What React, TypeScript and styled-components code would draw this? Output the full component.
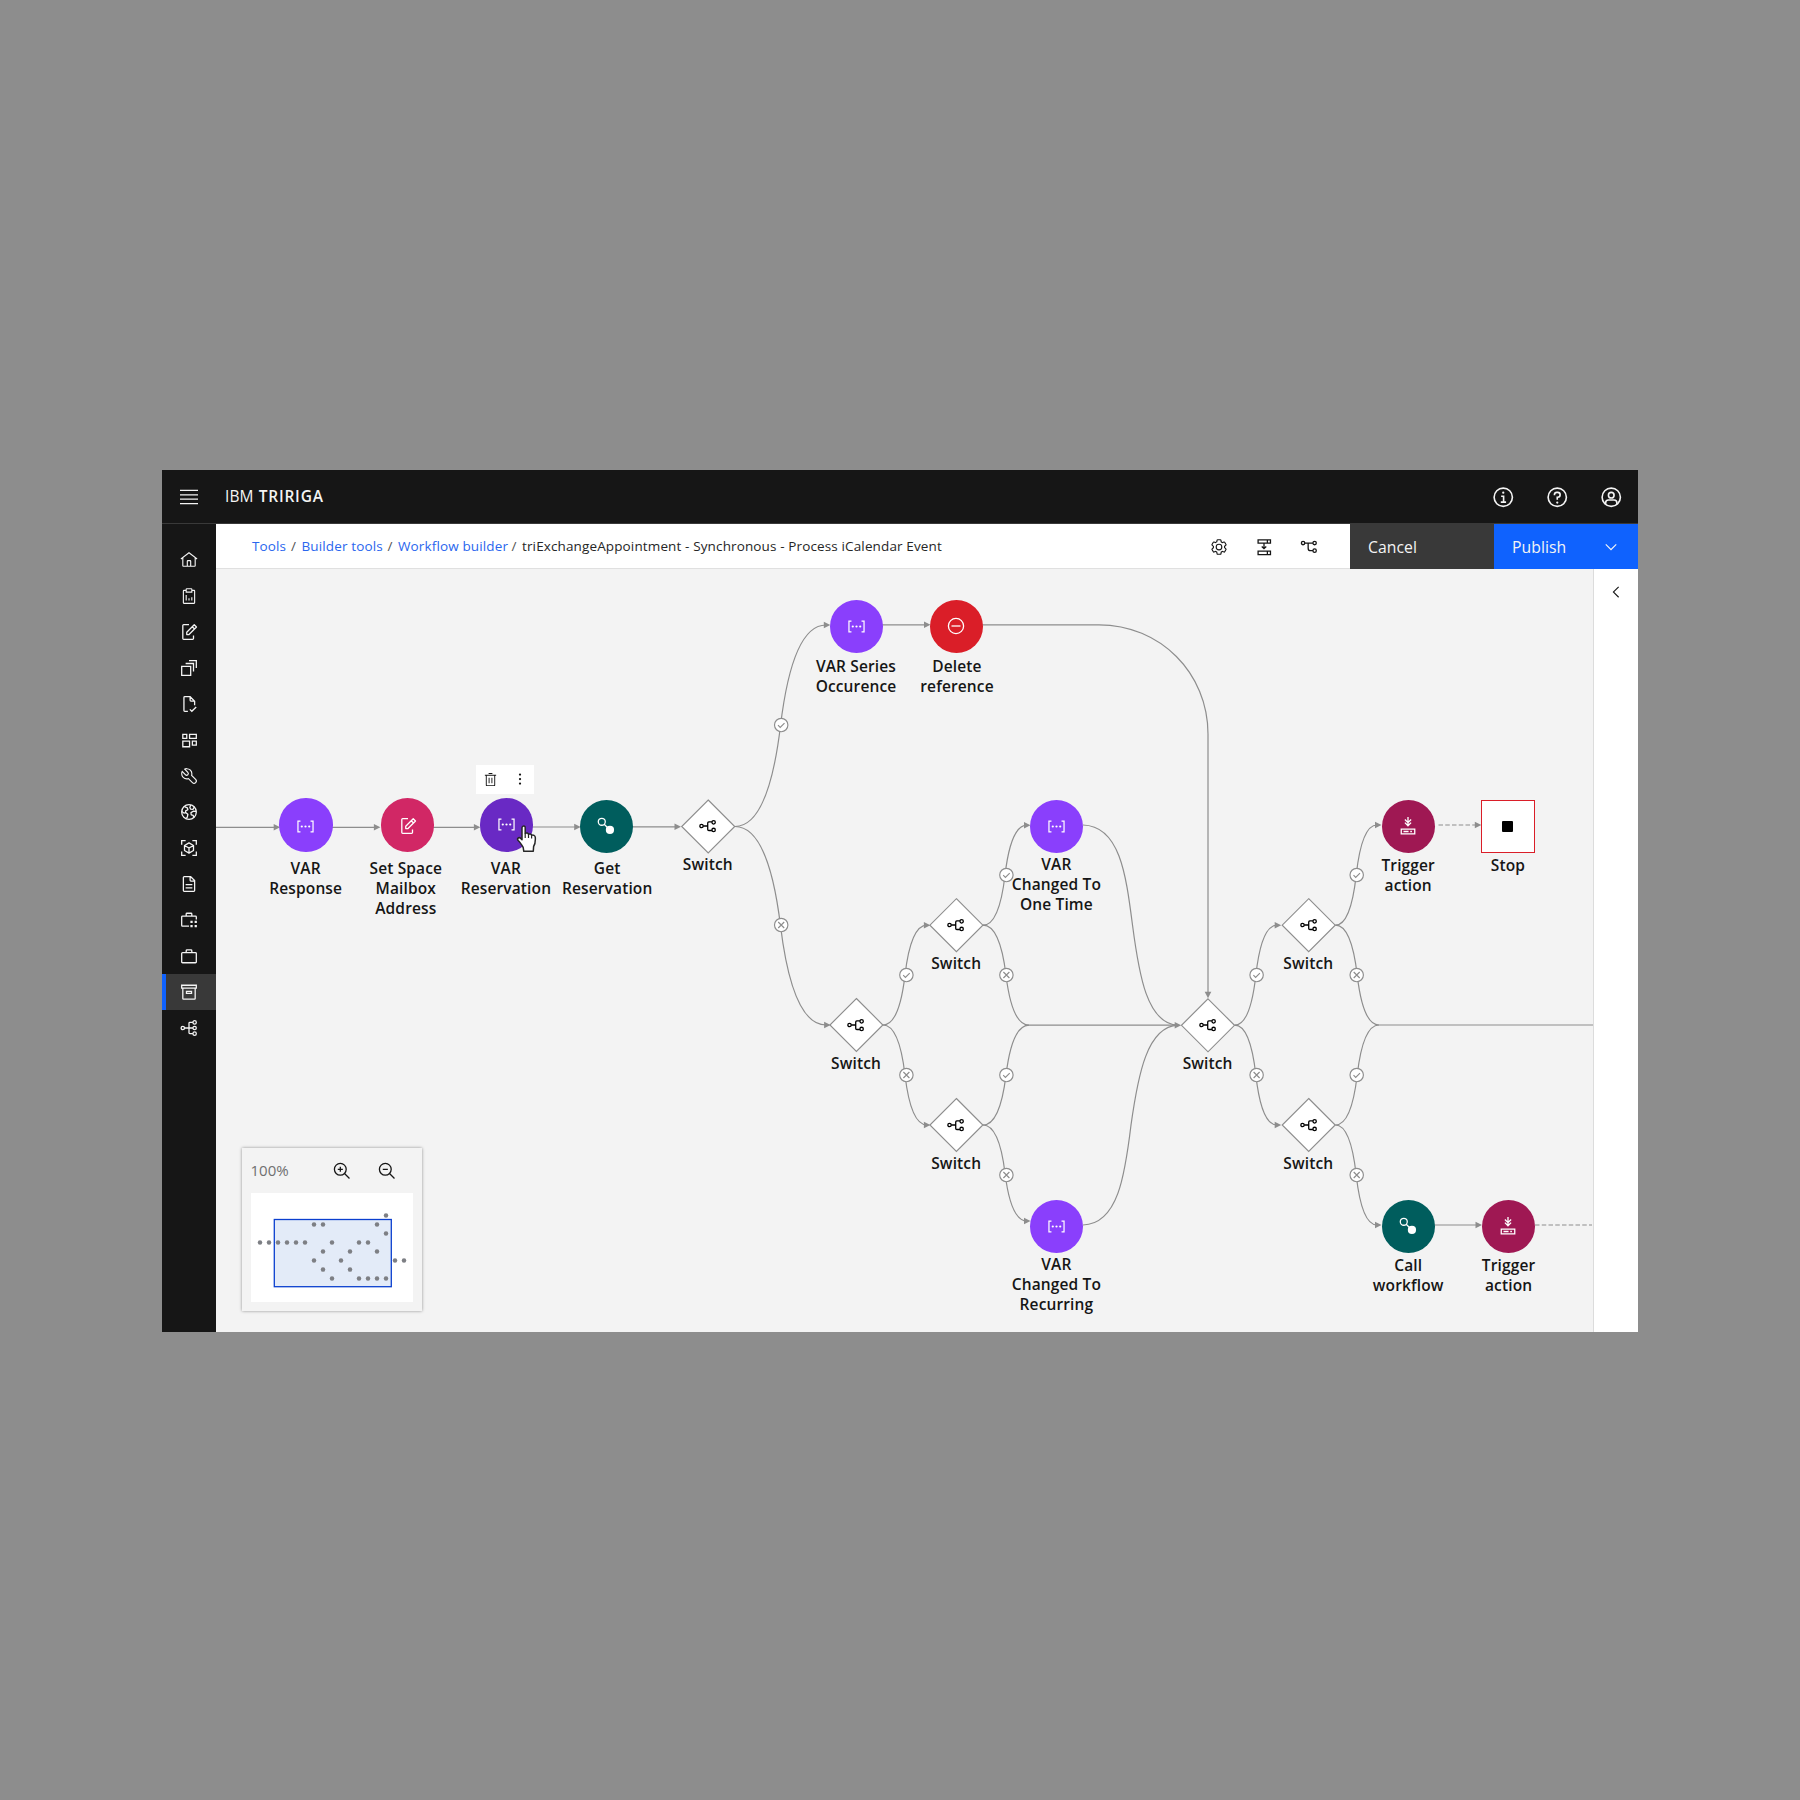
import React, { ReactNode } from 'react';
import styled, { createGlobalStyle, css } from 'styled-components';

const GlobalStyle = createGlobalStyle`
  *, *::before, *::after { box-sizing: border-box; }
  body { margin: 0; background: #8d8d8d; }
`;

const FONT = '"Open Sans", "Noto Sans", sans-serif';

/* ---------- icons (32 unit grid) ---------- */

const Svg = styled.svg<{ $size: number }>`
  display: block;
  flex: none;
  width: ${(p) => p.$size}px;
  height: ${(p) => p.$size}px;
  overflow: visible;
`;

const solid = (children: ReactNode) => <g fill="currentColor">{children}</g>;
const line = (children: ReactNode) => (
  <g fill="none" stroke="currentColor" strokeWidth="2.3">{children}</g>
);

const icons: Record<string, ReactNode> = {
  menu: line(<path d="M0 4.4H32M0 12.2H32M0 19.9H32M0 27.6H32" />),
  home: solid(
    <path d="M16.6123,2.2138a1.01,1.01,0,0,0-1.2427,0L1,13.4194l1.2427,1.5717L4,13.6208V26a2.0041,2.0041,0,0,0,2,2H26a2.0037,2.0037,0,0,0,2-2V13.63L29.7573,15,31,13.4282ZM18,26H14V18h4Zm2,0V18a2.0023,2.0023,0,0,0-2-2H14a2.002,2.002,0,0,0-2,2v8H6V12.0615l10-7.79,10,7.8005V26Z" />,
  ),
  report: solid(
    <>
      <path d="M15 20h2v4h-2zM20 18h2v6h-2zM10 14h2v10h-2z" />
      <path d="M25,5H22V4a2,2,0,0,0-2-2H12a2,2,0,0,0-2,2V5H7A2,2,0,0,0,5,7V28a2,2,0,0,0,2,2H25a2,2,0,0,0,2-2V7A2,2,0,0,0,25,5ZM12,4h8V8H12ZM25,28H7V7h3v3H22V7h3Z" />
    </>,
  ),
  edit: line(
    <>
      <path d="M16 3H6.5A1.5 1.5 0 0 0 5 4.500V27.500A1.500 1.500 0 0 0 6.500 29H22.500A1.500 1.500 0 0 0 24 27.500V22" />
      <path d="M12 20.500V16.500L25.300 3.200L29.300 7.200L16 20.500ZM21.800 6.700L25.800 10.700" strokeLinejoin="round" />
    </>,
  ),
  stack: line(<path d="M3 13H19V29H3ZM10 8H24V22M16 3H29V16" />),
  docCheck: line(
    <path d="M14 29H8.500A1.500 1.500 0 0 1 7 27.500V4.500A1.500 1.500 0 0 1 8.500 3H18L26 11V18M18 3V9.500A1.500 1.500 0 0 0 19.500 11H26M17.500 25.500L21 29L28.800 21.200" />,
  ),
  grid: line(<path d="M5 6H12V13H5ZM17 6H29V13H17ZM5 18H17V28H5ZM22 18H29V25H22Z" />),
  wrench: solid(
    <path d="M12.1,2a9.8,9.8,0,0,0-5.4,1.6l6.4,6.4a2.1,2.1,0,0,1,.2,3,2.1,2.1,0,0,1-3-.2L3.7,6.4A9.84,9.84,0,0,0,2,12.1,10.14,10.14,0,0,0,12.1,22.2a10.9,10.9,0,0,0,2.6-.3l6.7,6.7a5,5,0,0,0,7.1-7.1l-6.7-6.7a10.9,10.9,0,0,0,.3-2.6A10,10,0,0,0,12.1,2Zm8,10.1a7.61,7.61,0,0,1-.3,2.1l-.3,1.1.8.8,6.7,6.7a2.88,2.88,0,0,1,.9,2.1A2.72,2.72,0,0,1,27,27a2.9,2.9,0,0,1-4.2,0L16.1,20.3l-.8-.8-1.1.3a7.61,7.61,0,0,1-2.1.3,8.27,8.27,0,0,1-5.7-2.3A7.63,7.63,0,0,1,4,12.1a8.33,8.33,0,0,1,.3-2.2l4.4,4.4a4.14,4.14,0,0,0,5.9.2,4.14,4.14,0,0,0-.2-5.9L10,4.2a6.45,6.45,0,0,1,2-.3,8.27,8.27,0,0,1,5.7,2.3A8.49,8.49,0,0,1,20.1,12.1Z" />,
  ),
  globe: line(
    <>
      <circle cx="16" cy="16" r="13" />
      <path d="M8 6.500L13 8.500L14 12L10 14V17L7 18L3.500 15M10 17L14 20L13 25L11 27.500M19 3.500L17.500 8L19 11L23 11.500L25.500 7M28.800 15L24 14.500L19.500 17L20 21L23.500 22L24.500 26" strokeLinejoin="round" />
    </>,
  ),
  cube: line(
    <>
      <path d="M10 3H3V10M22 3H29V10M10 29H3V22M22 29H29V22" />
      <path d="M16 7L24 11.500V20.500L16 25L8 20.500V11.500ZM8 11.500L16 16L24 11.500M16 16V25" strokeLinejoin="round" />
    </>,
  ),
  document: line(
    <path d="M19 3H7.500A1.500 1.500 0 0 0 6 4.500V27.500A1.500 1.500 0 0 0 7.500 29H24.500A1.500 1.500 0 0 0 26 27.500V10ZM18 3V9.500A1.500 1.500 0 0 0 19.500 11H26M10 17H22M10 23H22" />,
  ),
  caseDots: (
    <>
      {line(<path d="M16 27H4.500A1.500 1.500 0 0 1 3 25.500V10.500A1.500 1.500 0 0 1 4.500 9H27.500A1.500 1.500 0 0 1 29 10.500V15M11 9V5.500A1.500 1.500 0 0 1 12.500 4H19.500A1.500 1.500 0 0 1 21 5.500V9" />)}
      {solid(<path d="M18.500 17.500h4v4h-4zM26 17.500h4v4h-4zM18.500 25h4v4h-4zM26 25h4v4h-4z" />)}
    </>
  ),
  case: line(
    <path d="M4.500 10H27.500A1.500 1.500 0 0 1 29 11.500V26.500A1.500 1.500 0 0 1 27.500 28H4.500A1.500 1.500 0 0 1 3 26.500V11.500A1.500 1.500 0 0 1 4.500 10ZM11 10V6.500A1.500 1.500 0 0 1 12.500 5H19.500A1.500 1.500 0 0 1 21 6.500V10" />,
  ),
  archive: line(<path d="M3 4H29V9H3ZM5 9V27.500A1 1 0 0 0 6 28.500H26A1 1 0 0 0 27 27.500V9M11.500 15H20.500V18.500H11.500Z" />),
  tree: line(
    <>
      <circle cx="5" cy="16" r="3" />
      <circle cx="26" cy="6" r="3" />
      <circle cx="26" cy="16" r="3" />
      <circle cx="26" cy="26" r="3" />
      <path d="M8 16H23M23 6H17.500A1.500 1.500 0 0 0 16 7.500V24.500A1.500 1.500 0 0 0 17.500 26H23" />
    </>,
  ),
  info: line(
    <>
      <circle cx="16" cy="16" r="13" />
      <path d="M13 14.500H16.500V22.500M12.500 23H20" />
      <circle cx="16" cy="9.500" r="1.600" fill="currentColor" stroke="none" />
    </>,
  ),
  help: line(
    <>
      <circle cx="16" cy="16" r="13" />
      <path d="M12 13V12.300A3.400 3.400 0 0 1 15.400 9H16.600A3.500 3.500 0 0 1 16.600 16H16V19.500" />
      <circle cx="16" cy="23.500" r="1.600" fill="currentColor" stroke="none" />
    </>,
  ),
  user: line(
    <>
      <circle cx="16" cy="16" r="13" />
      <circle cx="16" cy="13" r="4" />
      <path d="M8 26V24A4 4 0 0 1 12 20H20A4 4 0 0 1 24 24V26" />
    </>,
  ),
  settings: solid(
    <path d="M27,16.76c0-.25,0-.5,0-.76s0-.51,0-.77l1.92-1.68A2,2,0,0,0,29.3,11L26.94,7a2,2,0,0,0-1.73-1,2,2,0,0,0-.64.1l-2.43.82a11.35,11.35,0,0,0-1.31-.75l-.51-2.52a2,2,0,0,0-2-1.61H13.64a2,2,0,0,0-2,1.61l-.51,2.52a11.48,11.48,0,0,0-1.32.75L7.43,6.06A2,2,0,0,0,6.79,6,2,2,0,0,0,5.06,7L2.7,11a2,2,0,0,0,.41,2.51L5,15.24c0,.25,0,.5,0,.76s0,.51,0,.77L3.11,18.45A2,2,0,0,0,2.7,21L5.06,25a2,2,0,0,0,1.73,1,2,2,0,0,0,.64-.1l2.43-.82a11.35,11.35,0,0,0,1.31.75l.51,2.52a2,2,0,0,0,2,1.61h4.72a2,2,0,0,0,2-1.61l.51-2.52a11.48,11.48,0,0,0,1.32-.75l2.42.82a2,2,0,0,0,.64.1,2,2,0,0,0,1.73-1L29.3,21a2,2,0,0,0-.41-2.51ZM25.21,24l-3.43-1.16a8.86,8.86,0,0,1-2.71,1.57L18.36,28H13.64l-.71-3.55a9.36,9.36,0,0,1-2.7-1.57L6.79,24,4.43,20l2.72-2.4a8.9,8.9,0,0,1,0-3.13L4.43,12,6.79,8l3.43,1.16a8.86,8.86,0,0,1,2.71-1.57L13.64,4h4.72l.71,3.55a9.36,9.36,0,0,1,2.7,1.57L25.21,8,27.57,12l-2.72,2.4a8.9,8.9,0,0,1,0,3.13L27.57,20ZM16,22a6,6,0,1,1,6-6A5.94,5.94,0,0,1,16,22Zm0-10a3.91,3.91,0,0,0-4,4,3.91,3.91,0,0,0,4,4,3.91,3.91,0,0,0,4-4A3.91,3.91,0,0,0,16,12Z" />,
  ),
  insert: line(
    <path d="M5.500 3.500H27.500V9H5.500ZM22 3.500V9M5.500 23.500H27.500V29.500H5.500ZM22 23.500V29.500M16 9V18.500M12 15L16 19L20 15" />,
  ),
  branch: line(
    <>
      <circle cx="5.500" cy="9" r="3" />
      <circle cx="26" cy="9" r="3" />
      <circle cx="26" cy="22.500" r="3" />
      <path d="M8.500 9H23M14.500 9V18A4.500 4.500 0 0 0 19 22.500H23" />
    </>,
  ),
  chevronDown: solid(<path d="M16 22 6 12 7.400 10.600 16 19.200 24.600 10.600 26 12z" />),
  chevronLeft: solid(<path d="M10 16 20 6 21.400 7.400 12.800 16 21.400 24.600 20 26z" />),
  trash: solid(
    <path d="M12 12h2v12h-2zM18 12h2v12h-2zM4 6V8H6V28a2 2 0 0 0 2 2H24a2 2 0 0 0 2-2V8h2V6ZM8 28V8H24V28ZM12 2h8v2h-8z" />,
  ),
  overflow: solid(
    <>
      <circle cx="16" cy="8" r="2" />
      <circle cx="16" cy="16" r="2" />
      <circle cx="16" cy="24" r="2" />
    </>,
  ),
  zoomIn: line(
    <>
      <circle cx="13" cy="13" r="10.500" />
      <path d="M20.500 20.500L29.300 29.300M13 8.500V17.500M8.500 13H17.500" />
    </>,
  ),
  zoomOut: line(
    <>
      <circle cx="13" cy="13" r="10.500" />
      <path d="M20.500 20.500L29.300 29.300M8.500 13H17.500" />
    </>,
  ),
  variable: (
    <>
      {line(<path d="M6.500 6H1.800V26H6.500M25.500 6H30.200V26H25.500" />)}
      {solid(
        <>
          <circle cx="9" cy="16" r="2.100" />
          <circle cx="16" cy="16" r="2.100" />
          <circle cx="23" cy="16" r="2.100" />
        </>,
      )}
    </>
  ),
  link: (
    <>
      {line(
        <>
          <circle cx="8.500" cy="8.500" r="6.200" />
          <path d="M12.800 12.800L19 19" />
        </>,
      )}
      {solid(<circle cx="23" cy="23" r="7.300" />)}
    </>
  ),
  remove: line(
    <>
      <circle cx="16" cy="16" r="13.500" />
      <path d="M8 16H24" />
    </>,
  ),
  trigger: line(
    <>
      <path d="M16 0V14.500M10.500 4.500L16 10L21.500 4.500M10.500 10L16 15.500L21.500 10" />
      <path d="M4 21.500H28V30H4ZM8 25.800H17M20 25.800H23" />
    </>,
  ),
  fork: line(
    <>
      <circle cx="4.500" cy="16" r="3" />
      <circle cx="26" cy="9.500" r="3" />
      <circle cx="26" cy="23" r="3" />
      <path d="M7.500 16H15M23 8.500H17.500A2 2 0 0 0 15.500 10.500V22A2 2 0 0 0 17.500 24H23" />
    </>,
  ),
};

const Icon = ({ name, size = 18 }: { name: string; size?: number }) => (
  <Svg $size={size} viewBox="0 0 32 32" aria-hidden="true">{icons[name]}</Svg>
);

/* ---------- shell ---------- */

const Page = styled.div`
  min-height: 1800px;
  padding: 470px 162px 0;
  background: #8d8d8d;
  font-family: ${FONT};
`;

const Frame = styled.div`
  display: flex;
  flex-direction: column;
  width: 1476px;
  height: 862px;
  overflow: hidden;
  background: #fff;
`;

const Header = styled.header`
  display: flex;
  align-items: center;
  flex: none;
  height: 54px;
  background: #161616;
  color: #f4f4f4;
  box-shadow: inset 0 -1px 0 #393939;
`;

const HeaderCell = styled.div`
  display: flex;
  align-items: center;
  justify-content: center;
  width: 54px;
  height: 54px;
`;

const Brand = styled.div`
  flex: 1;
  padding: 0 0 2px 9px;
  font-size: 15.500px;
  line-height: 20px;
  letter-spacing: 0.100px;
  word-spacing: 1px;
  white-space: nowrap;

  b { font-weight: 600; letter-spacing: 0.780px; }
`;

const Body = styled.div`
  display: flex;
  flex: 1;
  min-height: 0;
`;

const Sidebar = styled.nav`
  display: flex;
  flex-direction: column;
  flex: none;
  width: 54px;
  padding-top: 18px;
  background: #161616;
  color: #f4f4f4;
`;

const SideItem = styled.div<{ $active?: boolean }>`
  display: flex;
  align-items: center;
  justify-content: center;
  height: 36px;
  padding-top: 0.600px;
  ${(p) => p.$active && css`
    background: #393939;
    box-shadow: inset 4px 0 0 #0f62fe;
  `}
`;

const Main = styled.main`
  display: flex;
  flex-direction: column;
  flex: 1;
  min-width: 0;
`;

const Toolbar = styled.div`
  display: flex;
  flex: none;
  height: 45px;
  background: #fff;
`;

const Crumbs = styled.div`
  display: flex;
  align-items: center;
  flex: 1;
  padding-left: 36px;
  font-size: 13.500px;
  line-height: 18px;
  letter-spacing: 0.130px;
  color: #262626;
  white-space: nowrap;
  border-bottom: 1px solid #e0e0e0;
`;

const Crumb = styled.a<{ $width: number }>`
  width: ${(p) => p.$width}px;
  color: #2a66ee;
`;

const Slash = styled.span`
  width: 16px;
  text-align: center;
  color: #525252;
`;

const Tools = styled.div`
  display: flex;
  align-items: center;
  padding: 1px 18.500px 0 0;
  color: #161616;
  border-bottom: 1px solid #e0e0e0;
`;

const Tool = styled.div`
  display: flex;
  justify-content: center;
  width: 45px;
`;

const Action = styled.button<{ $primary?: boolean }>`
  display: flex;
  align-items: center;
  justify-content: space-between;
  width: 144px;
  padding: 0 18px;
  border: 0;
  background: ${(p) => (p.$primary ? '#0f62fe' : '#393939')};
  color: #f4f4f4;
  font: 400 15.750px/20px ${FONT};
  letter-spacing: 0.050px;
`;

const Workspace = styled.div`
  display: flex;
  flex: 1;
  min-height: 0;
`;

const Canvas = styled.div`
  position: relative;
  flex: 1;
  overflow: hidden;
  background: #f3f3f3;
`;

const Drawer = styled.aside`
  display: flex;
  justify-content: center;
  flex: none;
  width: 45px;
  padding: 13.700px 1px 0 0;
  background: #fff;
  border-left: 1px solid #dcdcdc;
  color: #161616;
`;

/* ---------- diagram ---------- */

const ORIGIN = { x: 216, y: 569 };
const STAGE = { w: 1377, h: 763 };

const Edges = styled.svg`
  position: absolute;
  inset: 0;
  display: block;
`;

const Shape = styled.div<{ $x: number; $y: number; $fill: string; $stop?: boolean; $ink: string; $nudge?: number }>`
  position: absolute;
  left: ${(p) => p.$x - ORIGIN.x - 26.7}px;
  top: ${(p) => p.$y - ORIGIN.y - 26.7}px;
  display: flex;
  align-items: center;
  justify-content: center;
  width: 53.400px;
  height: 53.400px;
  padding-top: ${(p) => (p.$nudge || 0) * 2}px;
  border-radius: ${(p) => (p.$stop ? '0' : '50%')};
  background: ${(p) => p.$fill};
  color: ${(p) => p.$ink};
  ${(p) => p.$stop && css`border: 1px solid #da1e28;`}
`;

const StopMark = styled.div`
  width: 11px;
  height: 11px;
  border-radius: 1px;
  background: #000;
`;

const Label = styled.div<{ $x: number; $y: number }>`
  position: absolute;
  left: ${(p) => p.$x - ORIGIN.x - 60}px;
  top: ${(p) => p.$y - ORIGIN.y - 10.5}px;
  width: 120px;
  color: #161616;
  font-size: 15.500px;
  font-weight: 600;
  line-height: 20px;
  letter-spacing: 0.130px;
  text-align: center;
  white-space: pre;
`;

const HoverBar = styled.div`
  position: absolute;
  left: 260px;
  top: 196px;
  display: flex;
  align-items: center;
  width: 58px;
  height: 28.500px;
  background: #fff;
  color: #161616;
`;

const HoverTool = styled.div`
  display: flex;
  flex: 1;
  justify-content: center;
`;

const Pointer = styled.svg`
  position: absolute;
  left: 300px;
  top: 256px;
  width: 22px;
  height: 28px;
`;

type Kind = 'var' | 'varHover' | 'set' | 'call' | 'delete' | 'trigger' | 'stop' | 'switch';

const kinds: Record<Kind, { fill: string; icon: string; size: number; ink?: string }> = {
  var: { fill: '#8a3ffc', icon: 'variable', size: 17 },
  varHover: { fill: '#6929c4', icon: 'variable', size: 17 },
  set: { fill: '#d12765', icon: 'edit', size: 18 },
  call: { fill: '#005d5d', icon: 'link', size: 18 },
  delete: { fill: '#da1e28', icon: 'remove', size: 18 },
  trigger: { fill: '#9f1853', icon: 'trigger', size: 18 },
  stop: { fill: '#fff', icon: '', size: 0 },
  switch: { fill: 'transparent', icon: 'fork', size: 18, ink: '#000' },
};

interface FlowNode { kind: Kind; x: number; y: number; label: string; lx: number; ly: number; nudge?: number }

const nodes: FlowNode[] = [
  { kind: 'var', x: 305.9, y: 825, label: 'VAR\nResponse', lx: 305.7, ly: 868.5, nudge: 1.5 },
  { kind: 'set', x: 407.6, y: 825, label: 'Set Space\nMailbox\nAddress', lx: 405.8, ly: 868.5, nudge: 1.5 },
  { kind: 'varHover', x: 506.2, y: 825, label: 'VAR\nReservation', lx: 505.9, ly: 868.5 },
  { kind: 'call', x: 606.2, y: 826.4, label: 'Get\nReservation', lx: 607.2, ly: 868.5 },
  { kind: 'switch', x: 708.2, y: 826.5, label: 'Switch', lx: 707.8, ly: 864.8 },
  { kind: 'var', x: 856.3, y: 626.4, label: 'VAR Series\nOccurence', lx: 856, ly: 666.8 },
  { kind: 'delete', x: 956.3, y: 626.4, label: 'Delete\nreference', lx: 957, ly: 666.8 },
  { kind: 'var', x: 1056.5, y: 826.4, label: 'VAR\nChanged To\nOne Time', lx: 1056.4, ly: 864.8 },
  { kind: 'switch', x: 856.4, y: 1025, label: 'Switch', lx: 856, ly: 1063 },
  { kind: 'switch', x: 956.4, y: 925.2, label: 'Switch', lx: 956.2, ly: 963.5 },
  { kind: 'switch', x: 956.4, y: 1125, label: 'Switch', lx: 956.2, ly: 1163 },
  { kind: 'var', x: 1056.5, y: 1226.5, label: 'VAR\nChanged To\nRecurring', lx: 1056.4, ly: 1264.8 },
  { kind: 'switch', x: 1208, y: 1025.3, label: 'Switch', lx: 1207.6, ly: 1063.5 },
  { kind: 'switch', x: 1308.7, y: 925.2, label: 'Switch', lx: 1308.3, ly: 963.5 },
  { kind: 'switch', x: 1308.7, y: 1125, label: 'Switch', lx: 1308.3, ly: 1163 },
  { kind: 'trigger', x: 1408.2, y: 826.4, label: 'Trigger\naction', lx: 1408.2, ly: 865.8 },
  { kind: 'stop', x: 1508, y: 826.4, label: 'Stop', lx: 1507.9, ly: 865.8 },
  { kind: 'call', x: 1408.2, y: 1226.5, label: 'Call\nworkflow', lx: 1408.2, ly: 1265.8 },
  { kind: 'trigger', x: 1508.5, y: 1226.5, label: 'Trigger\naction', lx: 1508.6, ly: 1265 },
];

/* two mirrored half-curves that meet halfway between the ends */
const swoop = (x1: number, y1: number, x2: number, y2: number) => {
  const hw = (x2 - x1) / 2;
  const hh = (y2 - y1) / 2;
  const mx = x1 + hw;
  const my = y1 + hh;
  return `M${x1} ${y1}C${x1 + hw * 0.62} ${y1} ${mx - hw * 0.12} ${my - hh * 0.45} ${mx} ${my}C${mx + hw * 0.12} ${my + hh * 0.45} ${x2 - hw * 0.62} ${y2} ${x2} ${y2}`;
};

const lines: string[] = [
  'M216 827.300H276', 'M332 827.300H376', 'M433 827.300H475', 'M532 827H576', 'M632 826.800H677',
  swoop(735, 826.5, 826, 625), swoop(735, 826.5, 826, 1025),
  'M882 624.800H926', 'M982 624.800H1099C1160 624.800 1208 673 1208 734V994',
  swoop(883, 1025, 927, 925.2), swoop(883, 1025, 927, 1125),
  swoop(983, 925.2, 1027, 825.2), swoop(983, 925.2, 1029, 1025.2),
  swoop(983, 1125, 1029, 1025.2), swoop(983, 1125, 1027, 1221),
  'M1029 1025.200H1177',
  'M1083 825C1120 826 1126 875 1132.500 925C1139 975 1147 1024 1178 1025.200',
  'M1083 1225C1118 1224 1125 1175 1131 1125C1138 1075 1147 1026.500 1178 1025.200',
  swoop(1234.7, 1025.2, 1277, 925.2), swoop(1234.7, 1025.2, 1277, 1125),
  swoop(1335.4, 925.2, 1377, 825), swoop(1335.4, 925.2, 1379, 1025),
  swoop(1335.4, 1125, 1379, 1025), swoop(1335.4, 1125, 1377, 1225),
  'M1379 1025H1593', 'M1434 1225H1478',
];

const dashed = ['M1438.500 825H1476', 'M1535 1225H1592'];

const heads: [number, number][] = [
  [280.2, 827.3], [380.4, 827.3], [480.4, 827.3], [580.7, 827], [681, 826.8],
  [830.3, 625], [830.6, 1025], [930.5, 624.8], [930.4, 925.2], [930.4, 1125],
  [1030.5, 825.2], [1030.5, 1221], [1181.2, 1025.2], [1281.2, 925.2], [1281.2, 1125],
  [1381.5, 825], [1381.5, 1225], [1481.3, 825], [1482, 1225],
];

const badges: [number, number, boolean][] = [
  [781.2, 725, true], [781.2, 925, false],
  [906.4, 975, true], [906.4, 1075, false],
  [1006.4, 875, true], [1006.4, 975, false], [1006.4, 1075, true], [1006.4, 1175, false],
  [1256.6, 975, true], [1256.6, 1075, false],
  [1356.7, 875, true], [1356.7, 975, false], [1356.7, 1075, true], [1356.7, 1175, false],
];

const switches = nodes.filter((n) => n.kind === 'switch');

const Diagram = () => (
  <>
    <Edges width={STAGE.w} height={STAGE.h} viewBox={`${ORIGIN.x} ${ORIGIN.y} ${STAGE.w} ${STAGE.h}`}>
      <g fill="none" stroke="#8d8d8d" strokeWidth="1.2">
        {lines.map((d, i) => <path key={i} d={d} />)}
        {dashed.map((d, i) => <path key={i} d={d} strokeDasharray="4.500 2.250" />)}
      </g>
      <g fill="#8d8d8d">
        {heads.map(([x, y], i) => <path key={i} d={`M${x} ${y}l-6.500 -3.300v6.600z`} />)}
        <path d="M1208 998.300l-3.300 -6.500h6.600z" />
      </g>
      {badges.map(([x, y, ok], i) => (
        <g key={i} transform={`translate(${x} ${y})`} fill="none" stroke="#8d8d8d" strokeWidth="1.15">
          <circle r="6.700" fill="#fff" />
          <path d={ok ? 'M-3.200 0.200L-1 2.400L3.300 -1.900' : 'M-3 -3L3 3M3 -3L-3 3'} />
        </g>
      ))}
      {switches.map((n, i) => (
        <path key={i} d={`M${n.x} ${n.y - 26.5}l26.500 26.500l-26.500 26.500l-26.500 -26.500z`} fill="#fff" stroke="#8d8d8d" strokeWidth="1.15" />
      ))}
    </Edges>
    {nodes.map((n, i) => {
      const k = kinds[n.kind];
      return (
        <React.Fragment key={i}>
          <Shape $x={n.x} $y={n.y} $fill={k.fill} $ink={k.ink || '#fff'} $stop={n.kind === 'stop'} $nudge={n.nudge}>
            {n.kind === 'stop' ? <StopMark /> : <Icon name={k.icon} size={k.size} />}
          </Shape>
          <Label $x={n.lx} $y={n.ly}>{n.label}</Label>
        </React.Fragment>
      );
    })}
    <HoverBar>
      <HoverTool><Icon name="trash" size={15} /></HoverTool>
      <HoverTool><Icon name="overflow" size={18} /></HoverTool>
    </HoverBar>
    <Pointer viewBox="0 0 22 28">
      <path
        d="M6.500 1.500C8 0.500 9.200 1.300 9.200 2.500V8.500C10.500 7.500 12.200 8 12.500 9.300C13.700 8.500 15.300 9 15.600 10.300C17 9.600 19.300 10.300 19.300 12.500C19.500 16 19.300 19 17.600 21.500L17.300 26.300H7.800L7.200 22.500C5.500 20 4.500 17.500 2.200 15.500C0.500 13.500 2.800 11.800 4.500 13.200L6 14.800V2.500Z"
        fill="#fff" stroke="#262626" strokeWidth="1.500" strokeLinejoin="round"
      />
      <path d="M9.200 8.500V13M12.500 9.500V13M15.600 10.500V13.500" fill="none" stroke="#262626" strokeWidth="1.200" />
    </Pointer>
  </>
);

/* ---------- minimap ---------- */

const MapCard = styled.div`
  position: absolute;
  left: 25.500px;
  top: 579px;
  width: 180.500px;
  height: 163px;
  padding: 0 9px;
  background: #f3f3f3;
  box-shadow: 0 0 3px rgba(0, 0, 0, 0.400);
`;

const MapBar = styled.div`
  display: flex;
  align-items: center;
  height: 45px;
  color: #161616;
`;

const Percent = styled.span`
  width: 68.500px;
  padding-bottom: 1.500px;
  color: #6f6f6f;
  font-size: 15px;
  line-height: 20px;
`;

const MapTool = styled.div`
  display: flex;
  justify-content: center;
  width: 45px;
`;

const MapView = styled.svg`
  display: block;
  width: 162.500px;
  height: 108.500px;
  background: #fff;
`;

const dotRows: [number, number[]][] = [
  [23, [15]],
  [32, [7, 8, 14]],
  [41, [15]],
  [50, [1, 2, 3, 4, 5, 6, 9, 12, 13]],
  [59, [8, 11, 14]],
  [68, [7, 10, 16, 17]],
  [77, [8, 11]],
  [86, [9, 12, 13, 14, 15]],
];

const Minimap = () => (
  <MapCard>
    <MapBar>
      <Percent>100%</Percent>
      <MapTool><Icon name="zoomIn" /></MapTool>
      <MapTool><Icon name="zoomOut" /></MapTool>
    </MapBar>
    <MapView viewBox="0 0 162.500 108.500">
      <rect x="23.300" y="26.500" width="117" height="67.200" fill="#e3ebf8" stroke="#0b3fcf" strokeWidth="1.3" />
      <g fill="#7d7f84">
        {dotRows.map(([y, cols]) => cols.map((c) => <circle key={`${y}-${c}`} cx={c * 9} cy={y - 0.4} r="2.250" />))}
      </g>
    </MapView>
  </MapCard>
);

const sideItems = ['home', 'report', 'edit', 'stack', 'docCheck', 'grid', 'wrench', 'globe', 'cube', 'document', 'caseDots', 'case', 'archive', 'tree'];

export default function App() {
  return (
    <Page>
      <GlobalStyle />
      <Frame>
        <Header>
          <HeaderCell><Icon name="menu" /></HeaderCell>
          <Brand>IBM <b>TRIRIGA</b></Brand>
          <HeaderCell><Icon name="info" size={22.5} /></HeaderCell>
          <HeaderCell><Icon name="help" size={22.5} /></HeaderCell>
          <HeaderCell><Icon name="user" size={22.5} /></HeaderCell>
        </Header>
        <Body>
          <Sidebar>
            {sideItems.map((name) => (
              <SideItem key={name} $active={name === 'archive'}><Icon name={name} /></SideItem>
            ))}
          </Sidebar>
          <Main>
            <Toolbar>
              <Crumbs>
                <Crumb $width={33.5}>Tools</Crumb>
                <Slash>/</Slash>
                <Crumb $width={80.5}>Builder tools</Crumb>
                <Slash>/</Slash>
                <Crumb $width={108}>Workflow builder</Crumb>
                <Slash>/</Slash>
                <span>triExchangeAppointment - Synchronous - Process iCalendar Event</span>
              </Crumbs>
              <Tools>
                <Tool><Icon name="settings" /></Tool>
                <Tool><Icon name="insert" /></Tool>
                <Tool><Icon name="branch" /></Tool>
              </Tools>
              <Action>Cancel</Action>
              <Action $primary>Publish<Icon name="chevronDown" /></Action>
            </Toolbar>
            <Workspace>
              <Canvas>
                <Diagram />
                <Minimap />
              </Canvas>
              <Drawer><Icon name="chevronLeft" /></Drawer>
            </Workspace>
          </Main>
        </Body>
      </Frame>
    </Page>
  );
}
